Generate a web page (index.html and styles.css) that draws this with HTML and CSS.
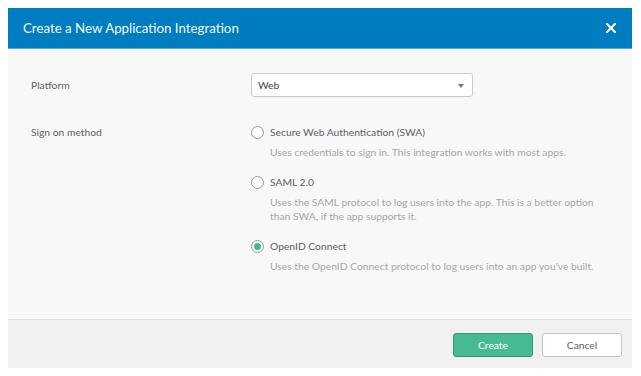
FILE: index.html
```html
<!DOCTYPE html>
<html>
<head>
<meta charset="utf-8">
<link rel="stylesheet" href="styles.css">
</head>
<body>
<div class="modal">
  <div class="modal-header">
    <span class="modal-title">Create a New Application Integration</span>
    <span class="close" aria-label="Close">
      <svg width="10" height="10" viewBox="0 0 10 10"><path d="M1 1L9 9M9 1L1 9" stroke="#fff" stroke-width="2" stroke-linecap="square"/></svg>
    </span>
  </div>
  <div class="modal-body">
    <div class="form-row row-platform">
      <div class="label">Platform</div>
      <div class="field">
        <div class="select">
          <span>Web</span>
          <svg class="caret" width="6" height="4" viewBox="0 0 6 4"><path d="M0 0H6L3 4Z" fill="#777"/></svg>
        </div>
      </div>
    </div>
    <div class="form-row">
      <div class="label label-radio">Sign on method</div>
      <div class="field options">
        <div class="option">
          <div class="radio-line"><span class="radio"></span><span class="opt-label">Secure Web Authentication (SWA)</span></div>
          <div class="desc">Uses credentials to sign in. This integration works with most apps.</div>
        </div>
        <div class="option">
          <div class="radio-line"><span class="radio"></span><span class="opt-label">SAML 2.0</span></div>
          <div class="desc">Uses the SAML protocol to log users into the app. This is a better option than SWA, if the app supports it.</div>
        </div>
        <div class="option">
          <div class="radio-line"><span class="radio checked"></span><span class="opt-label">OpenID Connect</span></div>
          <div class="desc">Uses the OpenID Connect protocol to log users into an app you've built.</div>
        </div>
      </div>
    </div>
  </div>
  <div class="modal-footer">
    <button class="btn btn-primary">Create</button>
    <button class="btn btn-default">Cancel</button>
  </div>
</div>
</body>
</html>
```
FILE: styles.css
```css
html, body {
  margin: 0;
  padding: 0;
  background: #fff;
}
body {
  padding: 8px;
  font-family: Lato, "Liberation Sans", sans-serif;
  font-size: 10.3px;
}
.modal {
  width: 624px;
  height: 360px;
  display: flex;
  flex-direction: column;
  background: #f8f8f8;
}
.modal-header {
  height: 40px;
  background: #007cc0;
  border-bottom: 1px solid #4fa9dc;
  display: flex;
  align-items: center;
  justify-content: space-between;
  padding: 0 15px;
}
.modal-title {
  color: #f4f8fc;
  font-size: 13.3px;
}
.close {
  display: flex;
  margin-right: 1px;
}
.modal-body {
  flex: 1;
  padding: 24px 0 0 23px;
}
.form-row {
  display: grid;
  grid-template-columns: 220px 1fr;
}
.row-platform {
  align-items: center;
  margin-bottom: 27px;
}
.label {
  color: #5e5e5e;
}
.label-radio {
  line-height: 16px;
}
.select {
  height: 22px;
  background: #fff;
  border: 1px solid #c9c9c9;
  border-radius: 3px;
  display: flex;
  align-items: center;
  justify-content: space-between;
  padding: 0 8px 0 6px;
  box-sizing: content-box;
  width: 206px;
  color: #444;
}
.caret {
  margin-top: 1px;
}
.options {
  display: flex;
  flex-direction: column;
  gap: 15px;
}
.radio-line {
  display: flex;
  align-items: center;
  height: 16px;
  color: #5e5e5e;
}
.radio {
  width: 11px;
  height: 11px;
  border: 1px solid #999;
  border-radius: 50%;
  background: #fff;
  margin: 0 6px 0 0;
  display: flex;
  align-items: center;
  justify-content: center;
}
.radio.checked::after {
  content: "";
  width: 7px;
  height: 7px;
  border-radius: 50%;
  background: #3dbd8c;
}
.desc {
  margin: 5px 0 0 19px;
  line-height: 14px;
  color: #a6a6a6;
  max-width: 330px;
}
.modal-footer {
  height: 49px;
  border-top: 1px solid #dcdcdc;
  background: #f1f1f1;
  display: flex;
  justify-content: flex-end;
  align-items: flex-start;
  gap: 9px;
  padding: 13px 10px 0 0;
  box-sizing: border-box;
}
.btn {
  width: 80px;
  height: 24px;
  border-radius: 3px;
  font-family: Lato, "Liberation Sans", sans-serif;
  font-size: 10.3px;
  padding: 0;
}
.btn-primary {
  background: #46bb91;
  border: 1px solid #2e9b71;
  color: #fff;
}
.btn-default {
  background: #fff;
  border: 1px solid #c6c6c6;
  color: #5e5e5e;
}
```
